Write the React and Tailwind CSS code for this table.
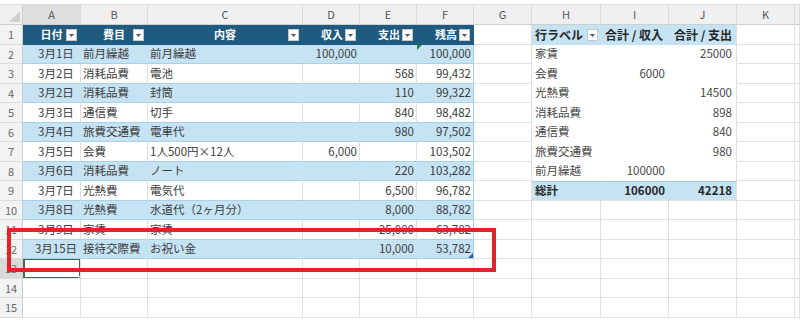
import React from "react";

const COLS = "grid grid-cols-[23px_58px_67px_155px_57px_57px_57px_58px_69px_68px_68px_58px_1fr]";
const LETTERS = ["A", "B", "C", "D", "E", "F", "G", "H", "I", "J", "K", ""];

const tableRows = [
  ["3月1日", "前月繰越", "前月繰越", "100,000", "", "100,000"],
  ["3月2日", "消耗品費", "電池", "", "568", "99,432"],
  ["3月2日", "消耗品費", "封筒", "", "110", "99,322"],
  ["3月3日", "通信費", "切手", "", "840", "98,482"],
  ["3月4日", "旅費交通費", "電車代", "", "980", "97,502"],
  ["3月5日", "会費", "1人500円×12人", "6,000", "", "103,502"],
  ["3月6日", "消耗品費", "ノート", "", "220", "103,282"],
  ["3月7日", "光熱費", "電気代", "", "6,500", "96,782"],
  ["3月8日", "光熱費", "水道代（2ヶ月分）", "", "8,000", "88,782"],
  ["3月9日", "家賃", "家賃", "", "25,000", "63,782"],
  ["3月15日", "接待交際費", "お祝い金", "", "10,000", "53,782"],
];

const pivotRows = [
  ["家賃", "", "25000"],
  ["会費", "6000", ""],
  ["光熱費", "", "14500"],
  ["消耗品費", "", "898"],
  ["通信費", "", "840"],
  ["旅費交通費", "", "980"],
  ["前月繰越", "100000", ""],
];

const base =
  "border-r border-b overflow-hidden whitespace-nowrap flex items-center text-[11.5px] text-[#3c3c3c] leading-none";
const grid = "border-r-[#e1e1e1] border-b-[#e1e1e1]";

function FilterBtn() {
  return (
    <span className="w-[11px] h-[12px] bg-white border border-[#c9c9c9] flex items-center justify-center shrink-0">
      <svg width="5" height="3" viewBox="0 0 5 3">
        <polygon points="0,0 5,0 2.5,3" fill="#555" />
      </svg>
    </span>
  );
}

function RowLabel({ n, selected }) {
  return (
    <div
      className={`${base} !text-[11px] justify-center border-r-[#cdcdcd] border-b-[#dcdcdc] !text-[#6a6a6a] ${
        selected ? "bg-[#d9d9d9]" : "bg-[#f3f3f3]"
      }`}
    >
      {n}
    </div>
  );
}

function Empty({ extra = "" }) {
  return <div className={`${base} ${grid} bg-white ${extra}`} />;
}

function Cell({ children, className = "" }) {
  return <div className={`${base} ${className}`}>{children}</div>;
}

export default function App() {
  const heights = (i) => (i % 2 === 0 ? "h-[20px]" : "h-[19px]");

  const rows = [];
  for (let r = 1; r <= 15; r++) {
    const h = heights(r - 1);
    const cells = [];
    cells.push(<RowLabel key="l" n={r} selected={r === 13} />);

    // Table A-F
    if (r === 1) {
      const hdr = ["日付", "費目", "内容", "収入", "支出", "残高"];
      hdr.forEach((t, i) => {
        const right = i >= 3;
        cells.push(
          <Cell
            key={"h" + i}
            className={`relative bg-[#1f5a80] border-r-[#1f5a80] border-b-[#1f5a80] !text-white !text-[11px] font-bold ${
              right ? "justify-end pr-[16px]" : "justify-center"
            }`}
          >
            <span>{t}</span>
            <span className="absolute right-[3px] top-[4px]">
              <FilterBtn />
            </span>
          </Cell>
        );
      });
    } else if (r <= 12) {
      const d = tableRows[r - 2];
      const blue = r % 2 === 0;
      const bg = blue ? "bg-[#c6e3f3]" : "bg-white";
      d.forEach((t, i) => {
        const vr =
          i === 5
            ? "border-r-[#a3cde8]"
            : blue
            ? "border-r-[#c6e3f3]"
            : "border-r-[#dedede]";
        let align = "justify-start pl-[2px]";
        if (i === 0) align = "justify-center pl-[9px]";
        if (i >= 3) align = "justify-end pr-[2px]";
        cells.push(
          <Cell key={"t" + i} className={`relative ${bg} ${vr} border-b-[#a9d0ea] ${align}`}>
            {t}
            {r === 2 && i === 5 && (
              <svg className="absolute left-0 top-0" width="5" height="5" viewBox="0 0 5 5">
                <polygon points="0,0 5,0 0,5" fill="#1c8c3a" />
              </svg>
            )}
            {r === 12 && i === 5 && (
              <svg className="absolute right-0 bottom-0" width="5" height="5" viewBox="0 0 5 5">
                <polygon points="5,0 5,5 0,5" fill="#2f5a9c" />
              </svg>
            )}
          </Cell>
        );
      });
    } else {
      for (let i = 0; i < 6; i++) {
        if (r === 13 && i === 0) {
          cells.push(
            <div key="sel" className={`${base} ${grid} bg-white relative`}>
              <div className="absolute left-0 top-[-1px] right-[-1px] bottom-[-1px] border-2 border-[#3d6e4e]" />
              <div className="absolute right-[-3px] bottom-[-3px] w-[5px] h-[5px] bg-[#3d6e4e] border border-white" />
            </div>
          );
        } else cells.push(<Empty key={"e" + i} />);
      }
    }

    // G
    cells.push(<Empty key="g" />);

    // Pivot H-J
    if (r === 1) {
      const ph = "bg-[#c6e3f3] border-b-[#c6e3f3] font-bold !text-[#262626] !text-[12px]";
      cells.push(
        <Cell key="ph" className={`relative ${ph} border-r-[#c6e3f3] pl-[3px]`}>
          行ラベル
          <span className="absolute left-[55px] top-[4px]">
            <FilterBtn />
          </span>
        </Cell>
      );
      cells.push(
        <Cell key="pi" className={`${ph} border-r-[#c6e3f3] justify-end pr-[5px]`}>
          合計 / 収入
        </Cell>
      );
      cells.push(
        <Cell key="pj" className={`${ph} border-r-[#dedede] justify-end pr-[4px]`}>
          合計 / 支出
        </Cell>
      );
    } else if (r <= 8) {
      const p = pivotRows[r - 2];
      const pc = "bg-white border-r-white border-b-white !text-[#474747]";
      cells.push(
        <Cell key="p0" className={`${pc} pl-[3px]`}>
          {p[0]}
        </Cell>
      );
      cells.push(
        <Cell key="p1" className={`${pc} justify-end pr-[3px]`}>
          {p[1]}
        </Cell>
      );
      cells.push(
        <Cell key="p2" className={`${pc} !border-r-[#dedede] justify-end pr-[4px]`}>
          {p[2]}
        </Cell>
      );
    } else if (r === 9) {
      const tb = "bg-[#c6e3f3] border-b-[#e1e1e1] border-t border-t-[#9fcbe7] font-bold !text-[#262626]";
      cells.push(
        <Cell key="t0" className={`${tb} border-r-[#c6e3f3] pl-[3px]`}>
          総計
        </Cell>
      );
      cells.push(
        <Cell key="t1" className={`${tb} border-r-[#c6e3f3] justify-end pr-[3px]`}>
          106000
        </Cell>
      );
      cells.push(
        <Cell key="t2" className={`${tb} border-r-[#dedede] justify-end pr-[4px]`}>
          42218
        </Cell>
      );
    } else {
      cells.push(<Empty key="h" />, <Empty key="i" />, <Empty key="j" />);
    }

    cells.push(<Empty key="k" />, <Empty key="z" />);

    rows.push(
      <div key={r} className={`${COLS} ${h}`}>
        {cells}
      </div>
    );
  }

  return (
    <div className="relative w-[800px] h-[322px] overflow-hidden bg-white font-['Noto_Sans_CJK_JP','Noto_Sans',sans-serif]">
      <div className="h-[5px] bg-white border-b border-[#dcdcdc]" />
      <div className={`${COLS} h-[20px]`}>
        <div className="bg-[#f0f0f0] border-r border-b border-[#cfcfcf] flex items-end justify-end p-[2px]">
          <svg width="11" height="11" viewBox="0 0 11 11">
            <polygon points="11,0 11,11 0,11" fill="#cfcfcf" />
          </svg>
        </div>
        {LETTERS.map((l, i) => (
          <div
            key={i}
            className={`flex items-center justify-center text-[11px] text-[#555] border-r border-r-[#dadada] border-b border-b-[#cfcfcf] ${
              i === 0 ? "bg-[#dedede]" : "bg-[#f0f0f0]"
            }`}
          >
            {l}
          </div>
        ))}
      </div>
      {rows}
      <div className="absolute left-[7px] top-[228px] w-[489px] h-[44px] border-[4px] border-[#e0242c]" />
    </div>
  );
}
